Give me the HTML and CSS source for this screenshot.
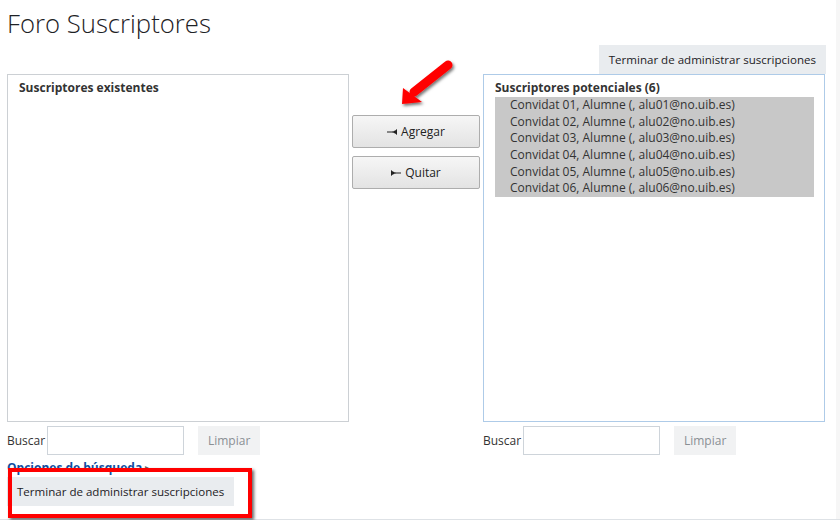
FILE: index.html
```html
<!DOCTYPE html>
<html lang="es">
<head>
    <meta charset="UTF-8">
    <title>Foro Suscriptores</title>
    <link rel="stylesheet" href="styles.css">
</head>
<body>
    <div class="page">
        <h2 class="page-title">Foro Suscriptores</h2>

        <div class="top-actions">
            <button class="btn-secondary">Terminar de administrar suscripciones</button>
        </div>

        <div class="subscribers">
            <div class="side">
                <div class="list-box">
                    <div class="list-label">Suscriptores existentes</div>
                </div>
                <div class="search-row">
                    <label>Buscar</label>
                    <input type="text" class="search-input">
                    <button class="btn-clear">Limpiar</button>
                </div>
            </div>

            <div class="middle">
                <button class="btn-move">
                    <svg width="10" height="6" viewBox="0 0 10 6"><rect x="0" y="2.5" width="6" height="1" fill="#222"/><polygon points="5,3 10,0.5 10,5.5" fill="#222"/><rect x="9" y="0.5" width="1" height="5" fill="#222"/></svg>
                    Agregar
                </button>
                <button class="btn-move">
                    <svg width="10" height="6" viewBox="0 0 10 6"><rect x="0" y="0.5" width="1" height="5" fill="#222"/><polygon points="0,0.5 5,3 0,5.5" fill="#222"/><rect x="4" y="2.5" width="6" height="1" fill="#222"/></svg>
                    Quitar
                </button>
            </div>

            <div class="side">
                <div class="list-box focused">
                    <div class="list-label">Suscriptores potenciales (6)</div>
                    <div class="options">
                        <div class="option">Convidat 01, Alumne (, alu01@no.uib.es)</div>
                        <div class="option">Convidat 02, Alumne (, alu02@no.uib.es)</div>
                        <div class="option">Convidat 03, Alumne (, alu03@no.uib.es)</div>
                        <div class="option">Convidat 04, Alumne (, alu04@no.uib.es)</div>
                        <div class="option">Convidat 05, Alumne (, alu05@no.uib.es)</div>
                        <div class="option">Convidat 06, Alumne (, alu06@no.uib.es)</div>
                    </div>
                </div>
                <div class="search-row">
                    <label>Buscar</label>
                    <input type="text" class="search-input">
                    <button class="btn-clear">Limpiar</button>
                </div>
            </div>
        </div>

        <a class="search-options" href="#">Opciones de búsqueda <span class="caret">&#9656;</span></a>

        <div class="bottom-actions">
            <button class="btn-secondary">Terminar de administrar suscripciones</button>
            <div class="highlight"></div>
        </div>

        <svg class="pointer" width="65" height="55" viewBox="0 0 65 55">
            <defs>
                <filter id="shadow" x="-30%" y="-30%" width="160%" height="160%">
                    <feDropShadow dx="1.5" dy="2" stdDeviation="1.5" flood-color="#000" flood-opacity="0.55"/>
                </filter>
            </defs>
            <g filter="url(#shadow)">
                <line x1="53" y1="10" x2="19" y2="37" stroke="#f00" stroke-width="9" stroke-linecap="round"/>
                <polygon points="7,49 8,33 27,47" fill="#f00"/>
            </g>
        </svg>
    </div>
</body>
</html>
```

FILE: styles.css
```css
* {
    box-sizing: border-box;
}

body {
    margin: 0;
    background: #fff;
    color: #1d2125;
    font-family: "Open Sans", "Noto Sans", sans-serif;
    font-size: 12px;
    overflow: hidden;
}

.page {
    position: relative;
    width: 840px;
    height: 520px;
    padding: 0 14px 0 7px;
    border-bottom: 1px solid #dee2e6;
    box-shadow: inset -4px 0 0 #f6f6f6;
}

.page-title {
    margin: 0;
    height: 45px;
    padding-top: 6px;
    font-size: 25.7px;
    font-weight: 300;
    line-height: 36px;
    color: #1d2125;
}

.top-actions {
    display: flex;
    justify-content: flex-end;
}

.btn-secondary {
    height: 29px;
    padding: 0 10px;
    border: none;
    background: #e9ecef;
    color: #1d2125;
    font-family: inherit;
    font-size: 11.55px;
}

.subscribers {
    display: flex;
}

.side {
    width: 342px;
}

.list-box {
    height: 348px;
    border: 1px solid #ccd0d4;
    padding: 4px 10px 0 11px;
}

.list-box.focused {
    border-color: #aecbe8;
}

.list-label {
    font-weight: 700;
    color: #333;
    line-height: 18px;
}

.options {
    background: #c8c8c8;
}

.option {
    height: 16.7px;
    line-height: 16.7px;
    padding-left: 15px;
    color: #333;
}

.middle {
    width: 134px;
    display: flex;
    flex-direction: column;
    gap: 8px;
    padding: 41px 3px 0;
}

.btn-move {
    height: 33px;
    border: 1px solid #adadad;
    border-radius: 2px;
    background: linear-gradient(#f6f6f6, #e3e3e3);
    color: #222;
    font-family: inherit;
    font-size: 12px;
    display: flex;
    align-items: center;
    justify-content: center;
    gap: 4px;
}

.search-row {
    display: flex;
    align-items: center;
    margin-top: 4px;
    color: #333;
}

.search-input {
    width: 137px;
    height: 29px;
    margin-left: 2px;
    border: 1px solid #ced4da;
}

.btn-clear {
    height: 29px;
    width: 62px;
    margin-left: 14px;
    border: none;
    background: #f1f2f3;
    color: #8a8f94;
    font-family: inherit;
    font-size: 12px;
}

.search-options {
    display: block;
    margin-top: 4px;
    line-height: 17px;
    color: #0f4ea0;
    font-weight: 700;
    text-decoration: none;
}

.search-options .caret {
    font-weight: 400;
    color: #666;
}

.bottom-actions {
    position: relative;
    margin-top: -8px;
    padding-top: 9px;
}

.highlight {
    position: absolute;
    left: 1px;
    top: 0;
    width: 244px;
    height: 50px;
    border: 4px solid #f00;
    box-shadow: 2px 2px 3px rgba(0, 0, 0, 0.6);
}

.pointer {
    position: absolute;
    left: 395px;
    top: 55px;
}
```
